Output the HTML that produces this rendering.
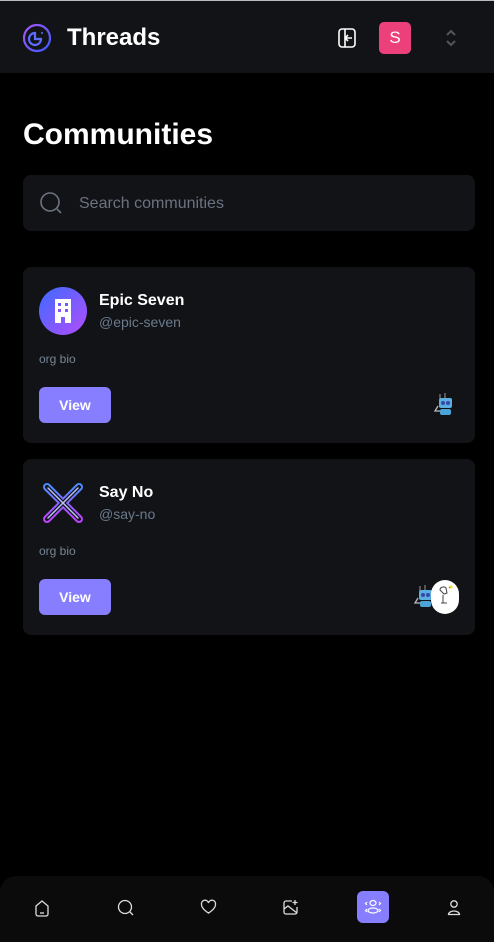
<!DOCTYPE html>
<html><head><meta charset="utf-8"><style>
*{box-sizing:border-box;margin:0;padding:0}
body{width:494px;height:942px;background:#000;font-family:"Liberation Sans",sans-serif;color:#fff;position:relative;overflow:hidden}
.top{position:absolute;left:0;top:0;width:494px;height:73px;background:#121317;border-top:1px solid #bbb}
.title{position:absolute;left:67px;top:23px;font-size:24px;font-weight:bold}
h1{position:absolute;left:23px;top:118px;font-size:30px;font-weight:bold}
.search{position:absolute;left:23px;top:175px;width:452px;height:56px;background:#121317;border-radius:8px}
.search span{position:absolute;left:56px;top:20px;font-size:16px;color:#6b7280}
.card{position:absolute;left:23px;width:452px;height:176px;background:#121317;border-radius:8px}
.name{position:absolute;left:76px;top:25px;font-size:16px;font-weight:bold}
.handle{position:absolute;left:76px;top:47px;font-size:14px;color:#6b7a8c}
.bio{position:absolute;left:16px;top:85px;font-size:12px;color:#7a8594}
.btn{position:absolute;left:16px;top:120px;width:72px;height:36px;background:#877eff;border-radius:6px;font-size:14px;font-weight:bold;text-align:center;line-height:36px}
.bot{position:absolute;left:0;top:876px;width:494px;height:66px;background:#0b0b0b;border-radius:16px 16px 0 0}
.bot svg{position:absolute;top:23px}
.robot{position:absolute;width:22px;height:24px}
</style></head><body>
<div class="top">
<svg style="position:absolute;left:22px;top:22px" width="30" height="30" viewBox="0 0 30 30"><defs><linearGradient id="g" x1="0" y1="0" x2="1" y2="1"><stop offset="0" stop-color="#a855f7"/><stop offset="1" stop-color="#3b5bfd"/></linearGradient></defs><circle cx="15" cy="15" r="13" fill="none" stroke="url(#g)" stroke-width="2.2"/><path d="M13 10a6 6 0 1 0 6 6h-6z" fill="none" stroke="#5b6cff" stroke-width="2.2"/><circle cx="20" cy="10" r="1" fill="#5b6cff"/></svg>
<div class="title">Threads</div>
<svg style="position:absolute;left:336px;top:26px" width="22" height="22" viewBox="0 0 22 22" fill="none" stroke="#fff" stroke-width="1.6"><rect x="3" y="2" width="16" height="18" rx="3"/><path d="M9 2v18M16 11h-6M12 8l-3 3 3 3"/></svg>
<div style="position:absolute;left:379px;top:21px;width:32px;height:32px;background:#ec407a;border-radius:5px;text-align:center;line-height:32px;font-size:17px">S</div>
<svg style="position:absolute;left:445px;top:28px" width="12" height="18" viewBox="0 0 12 18" fill="none" stroke="#555" stroke-width="2"><path d="M2 6l4-4 4 4M2 12l4 4 4-4"/></svg>
</div>
<h1>Communities</h1>
<div class="search"><svg style="position:absolute;left:16px;top:16px" width="24" height="24" viewBox="0 0 24 24" fill="none" stroke="#6b7280" stroke-width="1.6"><circle cx="11" cy="11" r="9"/><path d="M18 18l4 4"/></svg><span>Search communities</span></div>
<div class="card" style="top:267px">
<div style="position:absolute;left:16px;top:20px;width:48px;height:48px;border-radius:50%;background:linear-gradient(135deg,#3b6bff,#b44dff)"><svg style="position:absolute;left:13px;top:12px" width="22" height="24" viewBox="0 0 22 24" fill="#fff"><path d="M3 0h16v24h-6v-6h-4v6H3z"/><rect x="6" y="4" width="3" height="3" fill="#6c5bff"/><rect x="13" y="4" width="3" height="3" fill="#6c5bff"/><rect x="6" y="10" width="3" height="3" fill="#8a55ff"/><rect x="13" y="10" width="3" height="3" fill="#8a55ff"/></svg></div>
<div class="name">Epic Seven</div><div class="handle">@epic-seven</div><div class="bio">org bio</div><div class="btn">View</div>
<svg class="robot" style="left:410px;top:126px" viewBox="0 0 22 24"><path d="M7 1v5M12 0v6" stroke="#999" stroke-width="1"/><rect x="6" y="5" width="13" height="10" rx="2" fill="#5aaee0"/><circle cx="10" cy="10" r="2" fill="#3949ab"/><circle cx="15" cy="10" r="2" fill="#3949ab"/><rect x="7" y="16" width="11" height="6" rx="2" fill="#4ba3d8"/><path d="M5 13L2 18h5" stroke="#bbb" stroke-width="1.3" fill="none"/></svg>
</div>
<div class="card" style="top:459px">
<svg style="position:absolute;left:18px;top:22px" width="44" height="44" viewBox="0 0 44 44"><defs><linearGradient id="x" x1="0" y1="0" x2="0" y2="1"><stop offset="0" stop-color="#4a8cff"/><stop offset="1" stop-color="#c040ff"/></linearGradient></defs><path d="M6 6L38 38M38 6L6 38" stroke="url(#x)" stroke-width="8" stroke-linecap="round"/><path d="M6 6L38 38M38 6L6 38" stroke="#121317" stroke-width="4" stroke-linecap="round"/><path d="M7 7L37 37M37 7L7 37" stroke="#b8c0ff" stroke-width="1.5" stroke-linecap="round"/></svg>
<div class="name">Say No</div><div class="handle">@say-no</div><div class="bio">org bio</div><div class="btn">View</div>
<svg class="robot" style="left:390px;top:126px" viewBox="0 0 22 24"><path d="M7 1v5M12 0v6" stroke="#999" stroke-width="1"/><rect x="6" y="5" width="13" height="10" rx="2" fill="#5aaee0"/><circle cx="10" cy="10" r="2" fill="#3949ab"/><circle cx="15" cy="10" r="2" fill="#3949ab"/><rect x="7" y="16" width="11" height="6" rx="2" fill="#4ba3d8"/><path d="M5 13L2 18h5" stroke="#bbb" stroke-width="1.3" fill="none"/></svg>
<div style="position:absolute;left:408px;top:121px;width:28px;height:34px;border-radius:14px;background:#fff"><svg width="28" height="34" viewBox="0 0 28 34"><path d="M9 10c0-3 4-4 6-2l1 5-3 1zM12 15v8M10 23h6M18 8l2-2" stroke="#444" stroke-width="1" fill="none"/><circle cx="20" cy="7" r="1.5" fill="#e6e020"/></svg></div>
</div>
<div class="bot">
<svg style="left:34px" width="16" height="18" viewBox="0 0 16 18" fill="none" stroke="#ddd" stroke-width="1.3"><path d="M2 7l6-5 6 5v8a2 2 0 0 1-2 2H4a2 2 0 0 1-2-2z"/><path d="M6 14h4"/></svg>
<svg style="left:117px" width="18" height="18" viewBox="0 0 18 18" fill="none" stroke="#ddd" stroke-width="1.3"><circle cx="8" cy="8" r="6.5"/><path d="M13 13l3 3"/></svg>
<svg style="left:200px" width="17" height="16" viewBox="0 0 17 16" fill="none" stroke="#ddd" stroke-width="1.3"><path d="M8.5 14S1.5 10 1.5 5.5A3.5 3.5 0 0 1 8.5 4a3.5 3.5 0 0 1 7 1.5C15.5 10 8.5 14 8.5 14z"/></svg>
<svg style="left:282px" width="17" height="17" viewBox="0 0 17 17" fill="none" stroke="#ddd" stroke-width="1.3"><path d="M10 2H4a2 2 0 0 0-2 2v9a2 2 0 0 0 2 2h9a2 2 0 0 0 2-2V8M2 10l4-3 9 7M13 1v5M10.5 3.5h5"/></svg>
<div style="position:absolute;left:357px;top:15px;width:32px;height:32px;background:#877eff;border-radius:6px"><svg style="position:absolute;left:7px;top:8px" width="18" height="16" viewBox="0 0 18 16" fill="none" stroke="#fff" stroke-width="1.2"><ellipse cx="9" cy="4" rx="3" ry="2.5"/><ellipse cx="9" cy="11.5" rx="5" ry="2.5"/><path d="M3 3L1.5 4.5 3 6M15 3l1.5 1.5L15 6M3 10l-1.5 1.5L3 13M15 10l1.5 1.5L15 13"/></svg></div>
<svg style="left:447px" width="14" height="17" viewBox="0 0 14 17" fill="none" stroke="#ddd" stroke-width="1.3"><circle cx="7" cy="5" r="3.2"/><path d="M1.5 15.5a5.5 3.5 0 0 1 11 0z"/></svg>
</div>
</body></html>
